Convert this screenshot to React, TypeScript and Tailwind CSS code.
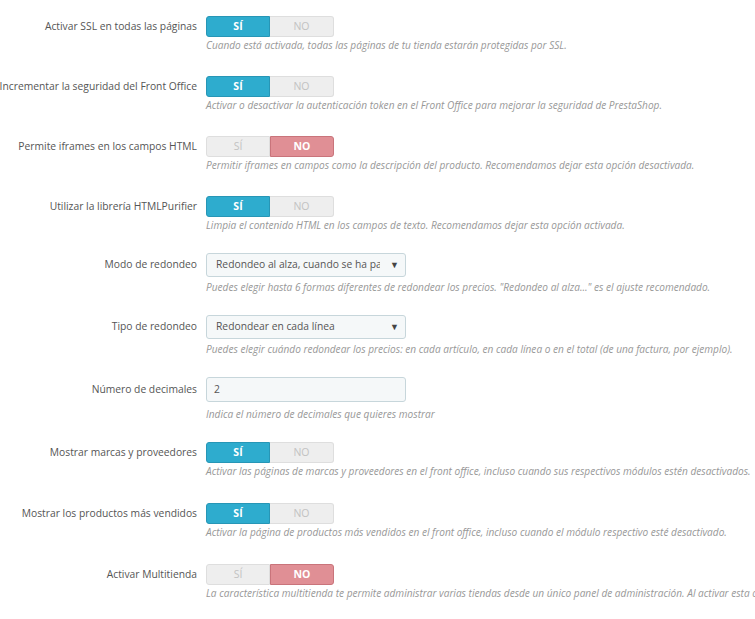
type Row =
  | { kind: "toggle"; label: string; on: boolean; help: string; mb: string }
  | { kind: "select"; label: string; value: string; help: string; mb: string }
  | { kind: "input"; label: string; value: string; help: string; mb: string };

const rows: Row[] = [
  { kind: "toggle", label: "Activar SSL en todas las páginas", on: true, help: "Cuando está activada, todas las páginas de tu tienda estarán protegidas por SSL.", mb: "mb-[23px]" },
  { kind: "toggle", label: "Incrementar la seguridad del Front Office", on: true, help: "Activar o desactivar la autenticación token en el Front Office para mejorar la seguridad de PrestaShop.", mb: "mb-[23px]" },
  { kind: "toggle", label: "Permite iframes en los campos HTML", on: false, help: "Permitir iframes en campos como la descripción del producto. Recomendamos dejar esta opción desactivada.", mb: "mb-[23px]" },
  { kind: "toggle", label: "Utilizar la librería HTMLPurifier", on: true, help: "Limpia el contenido HTML en los campos de texto. Recomendamos dejar esta opción activada.", mb: "mb-[20px]" },
  { kind: "select", label: "Modo de redondeo", value: "Redondeo al alza, cuando se ha pasado la mitad", help: "Puedes elegir hasta 6 formas diferentes de redondear los precios. \"Redondeo al alza...\" es el ajuste recomendado.", mb: "mb-[20px]" },
  { kind: "select", label: "Tipo de redondeo", value: "Redondear en cada línea", help: "Puedes elegir cuándo redondear los precios: en cada artículo, en cada línea o en el total (de una factura, por ejemplo).", mb: "mb-[20px]" },
  { kind: "input", label: "Número de decimales", value: "2", help: "Indica el número de decimales que quieres mostrar", mb: "mb-[20px]" },
  { kind: "toggle", label: "Mostrar marcas y proveedores", on: true, help: "Activar las páginas de marcas y proveedores en el front office, incluso cuando sus respectivos módulos estén desactivados.", mb: "mb-[24px]" },
  { kind: "toggle", label: "Mostrar los productos más vendidos", on: true, help: "Activar la página de productos más vendidos en el front office, incluso cuando el módulo respectivo esté desactivado.", mb: "mb-[24px]" },
  { kind: "toggle", label: "Activar Multitienda", on: false, help: "La característica multitienda te permite administrar varias tiendas desde un único panel de administración. Al activar esta opción, se habilitará la pestaña Multitienda.", mb: "mb-[24px]" },
];

const Toggle = ({ on }: { on: boolean }) => (
  <div className="flex h-[21px] w-[128px] text-[10.5px] font-bold leading-none">
    <span
      className={
        on
          ? "flex w-1/2 items-center justify-center rounded-l-[3px] border border-[#2796b6] bg-[#2eacce] text-white"
          : "flex w-1/2 items-center justify-center rounded-l-[3px] border border-[#dedede] bg-[#eeeeee] font-normal text-[#c2c2c2]"
      }
    >
      SÍ
    </span>
    <span
      className={
        on
          ? "flex w-1/2 items-center justify-center rounded-r-[3px] border border-l-0 border-[#dedede] bg-[#eeeeee] font-normal text-[#c2c2c2]"
          : "flex w-1/2 items-center justify-center rounded-r-[3px] border border-[#c9747b] bg-[#e08f95] text-white"
      }
    >
      NO
    </span>
  </div>
);

const App = () => {
  return (
    <div className="min-h-[619px] overflow-hidden bg-white pt-[16px] font-['Open_Sans',sans-serif] text-[#555]">
      {rows.map((row) => (
        <div key={row.label} className={`grid grid-cols-[206px_1fr] items-center ${row.mb}`}>
          <div className="flex justify-end whitespace-nowrap pr-[9px] text-[10.3px]">
            <span>{row.label}</span>
          </div>
          <div>
            {row.kind === "toggle" && <Toggle on={row.on} />}
            {row.kind === "select" && (
              <div className="flex h-[24px] w-[200px] items-center rounded-[3px] border border-[#c7d6db] bg-[#f5f8f9] pl-[9px] pr-[6px] text-[10.3px]">
                <span className="w-[164px] overflow-hidden whitespace-nowrap">{row.value}</span>
                <span className="ml-auto text-[9px] text-[#444]">▼</span>
              </div>
            )}
            {row.kind === "input" && (
              <div className="flex h-[25px] w-[200px] items-center rounded-[3px] border border-[#c7d6db] bg-[#f5f8f9] pl-[7px] text-[10.3px]">
                {row.value}
              </div>
            )}
          </div>
          <div />
          <p
            className={`whitespace-nowrap text-[10.1px] italic leading-[15px] text-[#989898] ${
              row.kind === "toggle" ? "mt-[1px]" : row.kind === "select" ? "mt-[3px]" : "mt-[5px]"
            }`}
          >
            {row.help}
          </p>
        </div>
      ))}
    </div>
  );
};

export default App;
